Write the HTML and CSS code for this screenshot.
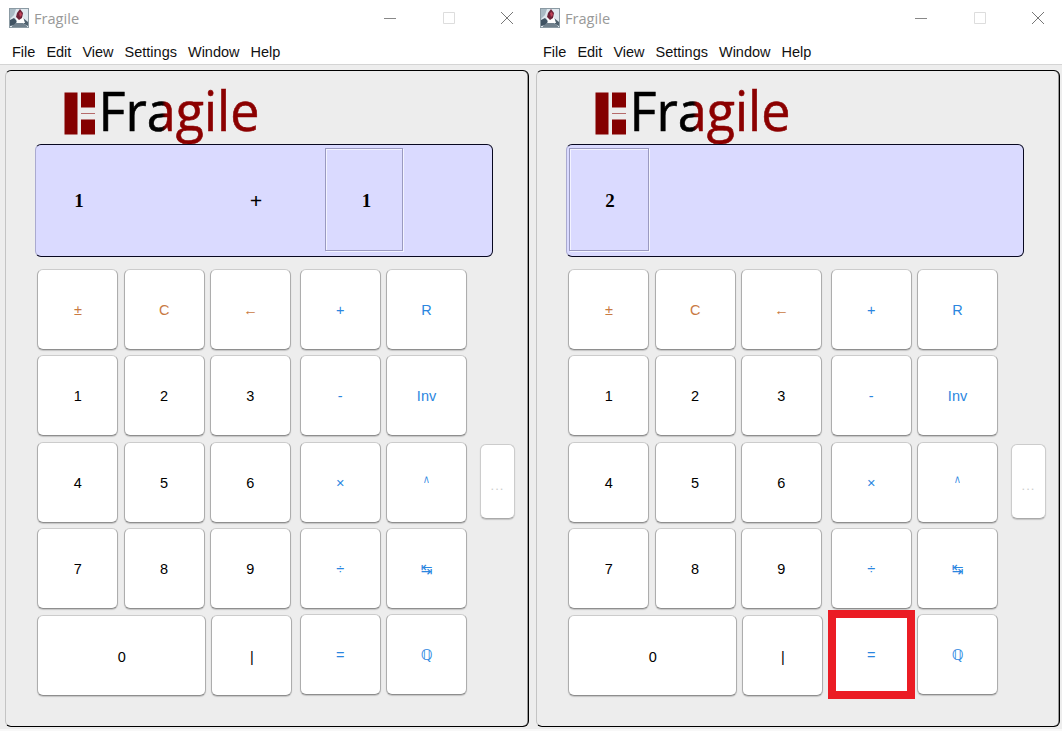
FILE: index.html
```
<!DOCTYPE html>
<html lang="en">
<head>
<meta charset="utf-8">
<title>Fragile</title>
<link rel="stylesheet" href="styles.css">
</head>
<body>
<svg class="defs" width="0" height="0" aria-hidden="true">
  <defs>
    <linearGradient id="split" gradientUnits="userSpaceOnUse" x1="0" y1="0" x2="200" y2="0">
      <stop offset="0.495" stop-color="#000"/><stop offset="0.515" stop-color="#8b0000"/>
    </linearGradient>
    <symbol id="cup" viewBox="0 0 20 20">
      <rect x=".5" y=".5" width="19" height="19" fill="#dfe8ee" stroke="#8b9aa3"/>
      <path d="M1 1h6L5 7 1 11z" fill="#a9bac4"/>
      <path d="M1 12l4-2 3 3-2 4-5 1z" fill="#405363"/>
      <path d="M14 10l5 4v4l-4-2z" fill="#4e606d"/>
      <path d="M7 9l7 0 2 6-8 0z" fill="#fff"/>
      <path d="M3 18l4-3 7 0 4 3v1H3z" fill="#70808c"/>
      <path d="M8 5l3-4 3 4-1 5-3 2-3-3z" fill="#6e2237"/>
      <path d="M10 5l2-1 1 3-2 2z" fill="#c04258"/>
    </symbol>
    <symbol id="min" viewBox="0 0 14 14"><path d="M1 7.500h12" stroke="#888" fill="none"/></symbol>
    <symbol id="max" viewBox="0 0 14 14"><path d="M1.500 1.500h11v11h-11z" stroke="#ddd" fill="none"/></symbol>
    <symbol id="close" viewBox="0 0 14 14"><path d="M1 1l12 12M13 1L1 13" stroke="#777" fill="none"/></symbol>
    <symbol id="logo" viewBox="0 0 200 57">
      <path d="M1.500 5.500h13v42h-13zM18 5.500h14v15H18zM18 32.500h14v15H18z" fill="#840000"/>
      <path d="M18 26.500h14" stroke="#b56a6a"/>
      <text x="35.500" y="44" class="logo-text" textLength="161" lengthAdjust="spacingAndGlyphs" fill="url(#split)" stroke="url(#split)">Fragile</text>
    </symbol>
  </defs>
</svg>
<main class="screens">
  <section class="window">
    <header class="titlebar">
      <svg class="app-icon"><use href="#cup"/></svg><span class="title">Fragile</span>
      <span class="controls"><svg><use href="#min"/></svg><svg><use href="#max"/></svg><svg><use href="#close"/></svg></span>
    </header>
    <nav class="menu"><span>File</span><span>Edit</span><span>View</span><span>Settings</span><span>Window</span><span>Help</span></nav>
    <div class="panel">
      <svg class="logo"><use href="#logo"/></svg>
      <div class="display sum"><span class="operand">1</span><span class="operator">+</span><span class="operand active">1</span></div>
      <div class="keys">
        <div class="numbers">
          <button class="key edit">±</button><button class="key edit">C</button><button class="key edit arrow">←</button>
          <button class="key">1</button><button class="key">2</button><button class="key">3</button>
          <button class="key">4</button><button class="key">5</button><button class="key">6</button>
          <button class="key">7</button><button class="key">8</button><button class="key">9</button>
          <div class="last"><button class="key zero">0</button><button class="key">|</button></div>
        </div>
        <div class="ops">
          <button class="key op">+</button><button class="key op">R</button>
          <button class="key op">-</button><button class="key op">Inv</button>
          <button class="key op">×</button><button class="key op"><span class="caret">^</span></button>
          <button class="key op">÷</button><button class="key op swap">↹</button>
          <button class="key op">=</button><button class="key op rational">ℚ</button>
        </div>
        <button class="key more">...</button>
      </div>
    </div>
  </section>
  <section class="window">
    <header class="titlebar">
      <svg class="app-icon"><use href="#cup"/></svg><span class="title">Fragile</span>
      <span class="controls"><svg><use href="#min"/></svg><svg><use href="#max"/></svg><svg><use href="#close"/></svg></span>
    </header>
    <nav class="menu"><span>File</span><span>Edit</span><span>View</span><span>Settings</span><span>Window</span><span>Help</span></nav>
    <div class="panel">
      <svg class="logo"><use href="#logo"/></svg>
      <div class="display result"><span class="operand active">2</span></div>
      <div class="keys">
        <div class="numbers">
          <button class="key edit">±</button><button class="key edit">C</button><button class="key edit arrow">←</button>
          <button class="key">1</button><button class="key">2</button><button class="key">3</button>
          <button class="key">4</button><button class="key">5</button><button class="key">6</button>
          <button class="key">7</button><button class="key">8</button><button class="key">9</button>
          <div class="last"><button class="key zero">0</button><button class="key">|</button></div>
        </div>
        <div class="ops">
          <button class="key op">+</button><button class="key op">R</button>
          <button class="key op">-</button><button class="key op">Inv</button>
          <button class="key op">×</button><button class="key op"><span class="caret">^</span></button>
          <button class="key op">÷</button><button class="key op swap">↹</button>
          <button class="key op marked">=</button><button class="key op rational">ℚ</button>
        </div>
        <button class="key more">...</button>
      </div>
    </div>
  </section>
</main>
</body>
</html>
```
FILE: styles.css
```
* { box-sizing: border-box; }
body { margin: 0; background: #fff; font: 15px "Liberation Sans", Arial, sans-serif; color: #111; }
.defs { position: absolute; }
.screens { display: grid; grid-template-columns: 531px 531px; width: 1062px; height: 731px; overflow: hidden; }
.window { display: flex; flex-direction: column; height: 731px; background: #ededed; border-bottom: 2px solid #f8f8f8; }
.titlebar { display: flex; align-items: center; height: 38px; padding: 0 17px 2px 9px; background: #fff; }
.app-icon { width: 20px; height: 20px; }
.title { margin-left: 5px; font: 14.6px "Open Sans", sans-serif; color: #999; }
.controls { display: flex; gap: 44.500px; margin-left: auto; }
.controls svg { width: 14px; height: 14px; }
.menu { display: flex; gap: 11px; height: 27px; padding: 5px 12px 0; background: #fff; border-bottom: 1px solid #d4d4d4; font-size: 14.500px; line-height: 18px; }
.panel { width: 524px; height: 657px; margin: 5px 0 0 5px; padding: 16px 0 0 29px; border: 1px solid #000; border-left-color: #c4c4c4; border-radius: 6px; box-shadow: inset -.5px 0 #444; }
.logo { display: block; width: 200px; height: 57px; margin-left: 28px; }
.logo-text { font: 54px "Open Sans", sans-serif; stroke-width: .6px; }
.display { display: flex; width: 458px; height: 113px; background: #dadaff; border: 1px solid #080820; border-left-color: #aaaacf; border-radius: 6px; font: bold 19px "Liberation Serif", serif; color: #000; }
.display span { display: flex; align-items: center; justify-content: center; height: 103px; margin-top: 3px; padding-top: 2px; }
.sum { padding-left: 3px; }
.operand { width: 80px; }
.operator { width: 66px; margin-left: 104px; font-size: 22px; }
.display .active { border: 1px solid #9a9ac0; box-shadow: inset 1px 1px #f3f3ff, 1px 1px #f3f3ff; }
.sum .active { width: 78px; margin-left: 36px; padding-left: 5px; }
.result { padding-left: 2px; }
.result .active { padding-left: 2px; }
.keys { display: flex; margin: 12px 0 0 2.400px; }
.numbers { display: grid; grid-template-columns: repeat(3, 81px); grid-auto-rows: 81px; gap: 5.250px; }
.ops { display: grid; grid-template-columns: repeat(2, 81px); grid-auto-rows: 81px; gap: 5.250px; margin-left: 8.900px; }
.key { width: 81px; height: 81px; padding: 1px 0 0; background: #fff; border: 1px solid #adadad; border-top-color: #ccc; border-bottom-color: #8e8e8e; border-radius: 6px; box-shadow: 0 1px 1px #c4c4c4; font: 14.500px "Liberation Sans", Arial, sans-serif; color: #000; }
.last { display: flex; gap: 5px; grid-column: 1 / 4; width: 255px; margin-top: 1px; }
.last .key { flex: none; padding-top: 2px; }
.last .zero { width: 169px; }
.edit { color: #c97a42; }
.op { color: #2b86df; }
.arrow { font-size: 14.500px; }
.swap { font: 14px "DejaVu Sans", sans-serif; }
.rational { font: 15px "DejaVu Sans", sans-serif; }
.caret { display: inline-block; transform: scale(.7, 1.25); }
.more { width: 35px; height: 75px; margin: 175px 0 0 13px; padding-top: 8px; border-color: #ccc; border-bottom-color: #aaa; font-size: 13px; letter-spacing: 1px; color: #ccc; }
.marked { width: 87px; height: 89px; margin: -4px 0 0 -3px; padding: 0; border: 8px solid #eb1c24; border-radius: 0; box-shadow: none; }
```
